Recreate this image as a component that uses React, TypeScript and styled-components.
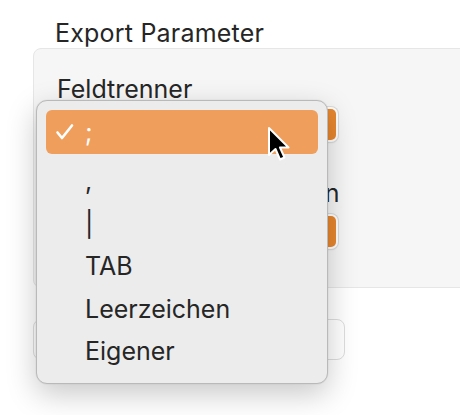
import * as React from 'react'
import styled, { createGlobalStyle } from 'styled-components'

const GlobalStyle = createGlobalStyle`
  html, body {
    margin: 0;
    padding: 0;
    background: #ffffff;
    overflow: hidden;
  }
  body {
    font-family: Inter, "Noto Sans", "Liberation Sans", sans-serif;
    color: #262626;
    -webkit-font-smoothing: antialiased;
  }
`

const Window = styled.div`
  position: relative;
  width: 460px;
  height: 415px;
  overflow: hidden;
  padding: 18px 0 0 33px;
  box-sizing: border-box;
`

const Title = styled.div`
  font-size: 25px;
  line-height: 30px;
  letter-spacing: 0.2px;
  margin-left: 22px;
`

const Panel = styled.div`
  width: 470px;
  height: 240px;
  box-sizing: border-box;
  background: #f6f6f6;
  border: 1px solid #e6e6e6;
  border-radius: 8px;
  padding: 25px 0 0 23px;
  display: flex;
  flex-direction: column;
`

const Label = styled.div<{ $gap?: number }>`
  font-size: 25px;
  line-height: 30px;
  white-space: nowrap;
  margin-top: ${(p) => p.$gap ?? 0}px;
`

const Popup = styled.div<{ $gap: number }>`
  width: 281px;
  height: 35px;
  margin: ${(p) => p.$gap}px 0 0 0;
  box-sizing: border-box;
  background: #ffffff;
  border-radius: 7px;
  box-shadow: 0 0 0 1px #dcdcdc, 0 1px 2px rgba(0, 0, 0, 0.1);
  display: flex;
  justify-content: flex-end;
  padding: 2px;
`

const PopupCap = styled.div`
  width: 22px;
  border-radius: 5px;
  background: #e8872f;
`

const Button = styled.div`
  width: 312px;
  height: 41px;
  margin-top: 31px;
  box-sizing: border-box;
  background: #ffffff;
  border: 1px solid #dedede;
  border-radius: 8px;
`

const Menu = styled.div`
  position: absolute;
  left: 36px;
  top: 100px;
  width: 292px;
  height: 284px;
  box-sizing: border-box;
  background: #ececec;
  border: 1px solid #b9b9b9;
  border-radius: 11px;
  box-shadow: 0 10px 30px rgba(0, 0, 0, 0.22), 0 0 0 0.5px rgba(0, 0, 0, 0.05);
  padding: 9px 9px;
  display: flex;
  flex-direction: column;
`

const Item = styled.div<{ $active?: boolean }>`
  height: ${(p) => (p.$active ? '44px' : '42.5px')};
  flex: none;
  display: flex;
  align-items: center;
  border-radius: 6px;
  font-size: 25px;
  color: ${(p) => (p.$active ? '#ffffff' : '#262626')};
  background: ${(p) => (p.$active ? '#f09e5c' : 'transparent')};
  margin-bottom: ${(p) => (p.$active ? '6px' : '0')};
`

const Check = styled.div`
  width: 39px;
  padding-left: 9px;
  box-sizing: border-box;
  display: flex;
  align-items: center;
`

const Cursor = styled.svg`
  position: absolute;
  left: 266px;
  top: 126px;
`

const items = [',', '|', 'TAB', 'Leerzeichen', 'Eigener']

export default function App() {
  return (
    <>
      <GlobalStyle />
      <Window>
        <Title>Export Parameter</Title>
        <Panel>
          <Label>Feldtrenner</Label>
          <Popup $gap={3}>
            <PopupCap />
          </Popup>
          <Label $gap={36}>Texterkennungszeichen</Label>
          <Popup $gap={6}>
            <PopupCap />
          </Popup>
        </Panel>
        <Button />
        <Menu>
          <Item $active>
            <Check>
              <svg width="20" height="18" viewBox="0 0 20 18">
                <polyline
                  points="2.5,9.5 7,15 17,2.5"
                  fill="none"
                  stroke="#ffffff"
                  strokeWidth="2.6"
                  strokeLinecap="round"
                  strokeLinejoin="round"
                />
              </svg>
            </Check>
            ;
          </Item>
          {items.map((t) => (
            <Item key={t}>
              <Check />
              {t}
            </Item>
          ))}
        </Menu>
        <Cursor width="26" height="40" viewBox="0 0 26 40">
          <path
            d="M3 2 L3 29 L9.5 23 L14 33.5 L18.5 31.5 L14 21.5 L22.5 21.5 Z"
            fill="#000000"
            stroke="#ffffff"
            strokeWidth="2"
            strokeLinejoin="round"
          />
        </Cursor>
      </Window>
    </>
  )
}
